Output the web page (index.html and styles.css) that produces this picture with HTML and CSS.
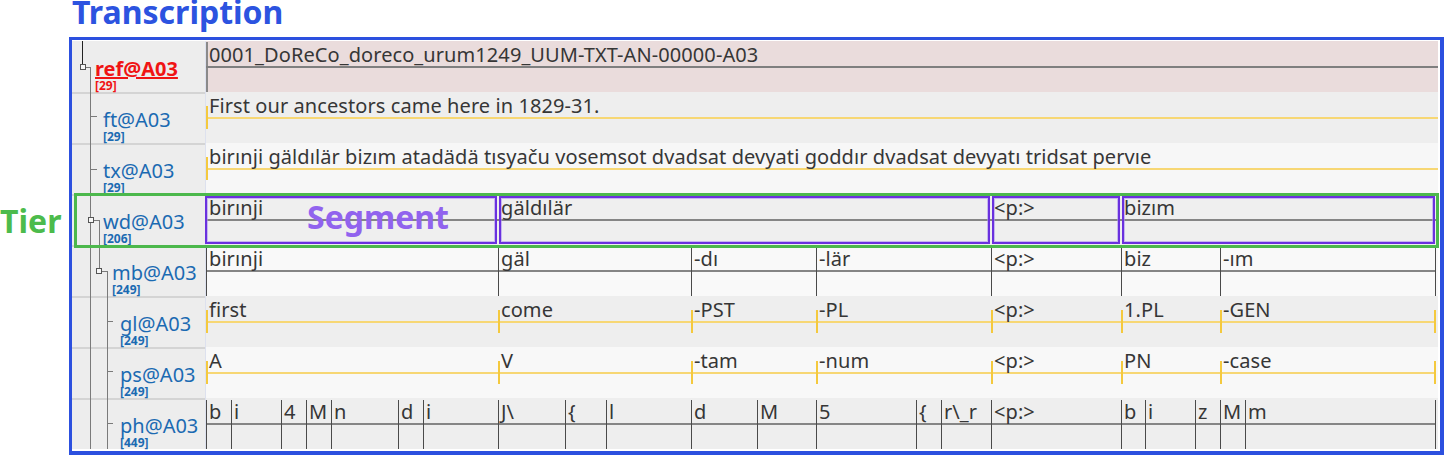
FILE: index.html
```html
<!DOCTYPE html>
<html>
<head>
<meta charset="utf-8">
<title>Transcription</title>
<link rel="stylesheet" href="styles.css">
</head>
<body>
<div class="page">
  <h1 class="title">Transcription</h1>
  <div class="main">
    <div class="gutter"><span class="tier-note">Tier</span></div>
    <div class="frame">
      <div class="labels">
        <svg class="tree" width="133" height="408" viewBox="0 0 133 408">
          <g fill="none" stroke-width="1">
            <path d="M10.5 0V23.5" stroke="#222"/>
            <path d="M13.5 26.5H18.5M18.5 26V408M18.5 75.5H25M18.5 128.5H25" stroke="#7a7a7a"/>
            <path d="M21.5 179.5H27.5M27.5 179V227.5M29.5 230.5H35.5M35.5 230V408M35.5 280.5H41M35.5 330.5H41M35.5 382.5H41" stroke="#7a7a7a"/>
            <rect x="8.5" y="23.5" width="5" height="5" fill="#f6f6f6" stroke="#555"/>
            <rect x="16.5" y="176.5" width="5" height="5" fill="#f6f6f6" stroke="#555"/>
            <rect x="24.5" y="227.5" width="5" height="5" fill="#f6f6f6" stroke="#555"/>
          </g>
        </svg>
        <div class="lrow lv0 active"><div class="lname">ref@A03</div><div class="lcount">[29]</div></div>
        <div class="lrow lv1"><div class="lname">ft@A03</div><div class="lcount">[29]</div></div>
        <div class="lrow lv1"><div class="lname">tx@A03</div><div class="lcount">[29]</div></div>
        <div class="lrow lv1"><div class="lname">wd@A03</div><div class="lcount">[206]</div></div>
        <div class="lrow lv2"><div class="lname">mb@A03</div><div class="lcount">[249]</div></div>
        <div class="lrow lv3"><div class="lname">gl@A03</div><div class="lcount">[249]</div></div>
        <div class="lrow lv3"><div class="lname">ps@A03</div><div class="lcount">[249]</div></div>
        <div class="lrow lv3"><div class="lname">ph@A03</div><div class="lcount">[449]</div></div>
      </div>
      <div class="data">
        <div class="row r-ref"><div class="cell full">0001_DoReCo_doreco_urum1249_UUM-TXT-AN-00000-A03</div></div>
        <div class="row r-ft"><div class="cell full">First our ancestors came here in 1829-31.</div></div>
        <div class="row r-tx"><div class="cell full">birınji gäldılär bizım atadädä tısyaču vosemsot dvadsat devyati goddır dvadsat devyatı tridsat pervıe</div></div>
        <div class="row r-wd">
          <div class="cell" style="width:292px">birınji</div>
          <div class="cell" style="width:493px">gäldılär</div>
          <div class="cell" style="width:130px">&lt;p:&gt;</div>
          <div class="cell" style="width:315px">bizım</div>
        </div>
        <div class="row r-mb">
          <div class="cell" style="width:292px">birınji</div>
          <div class="cell" style="width:193px">gäl</div>
          <div class="cell" style="width:125px">-dı</div>
          <div class="cell" style="width:175px">-lär</div>
          <div class="cell" style="width:130px">&lt;p:&gt;</div>
          <div class="cell" style="width:99px">biz</div>
          <div class="cell" style="width:216px">-ım</div>
        </div>
        <div class="row r-gl">
          <div class="cell" style="width:292px">first</div>
          <div class="cell" style="width:193px">come</div>
          <div class="cell" style="width:125px">-PST</div>
          <div class="cell" style="width:175px">-PL</div>
          <div class="cell" style="width:130px">&lt;p:&gt;</div>
          <div class="cell" style="width:99px">1.PL</div>
          <div class="cell" style="width:216px">-GEN</div>
        </div>
        <div class="row r-ps">
          <div class="cell" style="width:292px">A</div>
          <div class="cell" style="width:193px">V</div>
          <div class="cell" style="width:125px">-tam</div>
          <div class="cell" style="width:175px">-num</div>
          <div class="cell" style="width:130px">&lt;p:&gt;</div>
          <div class="cell" style="width:99px">PN</div>
          <div class="cell" style="width:216px">-case</div>
        </div>
        <div class="row r-ph">
          <div class="cell" style="width:25px">b</div>
          <div class="cell" style="width:50px">i</div>
          <div class="cell" style="width:25px">4</div>
          <div class="cell" style="width:25px">M</div>
          <div class="cell" style="width:67px">n</div>
          <div class="cell" style="width:25px">d</div>
          <div class="cell" style="width:75px">i</div>
          <div class="cell" style="width:67px">J\</div>
          <div class="cell" style="width:41px">{</div>
          <div class="cell" style="width:85px">l</div>
          <div class="cell" style="width:66px">d</div>
          <div class="cell" style="width:59px">M</div>
          <div class="cell" style="width:100px">5</div>
          <div class="cell" style="width:25px">{</div>
          <div class="cell" style="width:50px">r\_r</div>
          <div class="cell" style="width:130px">&lt;p:&gt;</div>
          <div class="cell" style="width:24px">b</div>
          <div class="cell" style="width:50px">i</div>
          <div class="cell" style="width:25px">z</div>
          <div class="cell" style="width:25px">M</div>
          <div class="cell" style="width:191px">m</div>
        </div>
      </div>
    </div>
    <div class="tier-box"></div>
    <div class="seg-note">Segment</div>
  </div>
</div>
</body>
</html>
```

FILE: styles.css
```css
* { box-sizing: border-box; }

body {
  margin: 0;
  background: #ffffff;
  font-family: "Noto Sans", "Open Sans", sans-serif;
}

.page {
  width: 1444px;
  height: 455px;
  overflow: hidden;
}

.title {
  margin: 0 0 0 72px;
  height: 37px;
  padding-bottom: 13px;
  font-size: 32px;
  line-height: 24px;
  font-weight: 700;
  color: #2c53e0;
}

.main {
  position: relative;
  display: flex;
}

.gutter {
  width: 69px;
  flex: none;
  padding-top: 168px;
}

.tier-note {
  display: block;
  font-size: 32px;
  line-height: 32px;
  font-weight: 700;
  color: #4cbb4c;
}

.frame {
  display: flex;
  width: 1375px;
  height: 418px;
  border-style: solid;
  border-color: #2c50df;
  border-width: 3px 4px 4px 3px;
  padding: 1px 2px 2px 0;
  background: #ffffff;
}

.labels {
  position: relative;
  width: 134px;
  flex: none;
  border-right: 1px solid #dde1ee;
  background: #ededed;
}

.tree {
  position: absolute;
  left: 0;
  top: 0;
}

.lrow {
  height: 51px;
  padding-top: 17px;
  white-space: nowrap;
}

.lrow + .lrow {
  background: linear-gradient(#d4d4d4, #d4d4d4) 0 0 / 100% 2px no-repeat;
}

.lname {
  font-size: 20px;
  line-height: 22px;
  color: #1b6ab2;
}

.lcount {
  font-size: 12px;
  line-height: 12px;
  font-weight: 700;
  color: #1b6ab2;
}

.lv0 { padding-left: 23px; }
.lv1 { padding-left: 31px; }
.lv2 { padding-left: 40px; }
.lv3 { padding-left: 48px; }

.lrow.active .lname {
  font-weight: 700;
  color: #f01414;
  text-decoration: underline;
}

.lrow.active .lcount { color: #f01414; }

.data {
  flex: 1;
  display: flex;
  flex-direction: column;
}

.row {
  height: 51px;
  display: flex;
}

.cell {
  flex: none;
  height: 51px;
  padding: 2px 0 0 3px;
  font-size: 20px;
  line-height: 24px;
  letter-spacing: 0.08px;
  color: #363636;
  white-space: nowrap;
  overflow: hidden;
}

.cell.full { flex: 1; }

.r-ref { background: #eadcdc; }
.r-ft { background: #eeeeee; }
.r-tx { background: #f7f7f7; }
.r-wd { background: #efefef; }
.r-mb { background: #f9f9f9; }
.r-gl { background: #eeeeee; }
.r-ps { background: #f8f8f8; }
.r-ph { background: #eeeeee; }

/* reference tier: gray line + left boundary */
.r-ref .cell {
  background:
    linear-gradient(#7f7f7f, #7f7f7f) 0 25px / 100% 2px no-repeat,
    linear-gradient(#8a8a8a, #8a8a8a) 0 1px / 2px 50px no-repeat;
}

/* symbolic association tiers: yellow line + yellow ticks */
.r-ft .cell,
.r-tx .cell,
.r-gl .cell,
.r-ps .cell {
  background:
    linear-gradient(#f4c93e, #f4c93e) 0 14px / 2px 23px no-repeat,
    linear-gradient(#f7d774, #f7d774) 0 25px / 100% 2px no-repeat;
}

.r-gl .cell:last-child,
.r-ps .cell:last-child {
  background:
    linear-gradient(#f4c93e, #f4c93e) 0 14px / 2px 23px no-repeat,
    linear-gradient(#f4c93e, #f4c93e) right 0 top 14px / 2px 23px no-repeat,
    linear-gradient(#f7d774, #f7d774) 0 25px / 100% 2px no-repeat;
}

/* subdivision tiers: dark boundaries + gray line */
.r-mb .cell,
.r-ph .cell {
  background:
    linear-gradient(#4a4a4a, #4a4a4a) 0 2px / 1px 49px no-repeat,
    linear-gradient(#858585, #858585) 0 25px / 100% 2px no-repeat;
}

.r-mb .cell:last-child,
.r-ph .cell:last-child {
  background:
    linear-gradient(#4a4a4a, #4a4a4a) 0 2px / 1px 49px no-repeat,
    linear-gradient(#4a4a4a, #4a4a4a) right 0 top 2px / 1px 49px no-repeat,
    linear-gradient(#858585, #858585) 0 25px / 100% 2px no-repeat;
}

/* word tier: segments outlined */
.r-wd .cell {
  position: relative;
  overflow: visible;
  background: linear-gradient(#858585, #858585) 0 25px / 100% 2px no-repeat;
}

.r-wd .cell::after {
  content: "";
  position: absolute;
  top: 2px;
  bottom: 1px;
  left: 1px;
  right: 1px;
  border: 2px solid #6a31de;
  box-shadow: inset 0 0 0 1px rgba(170, 145, 240, 0.6);
}

.r-wd .cell:first-child::after { left: -1px; }

.tier-box {
  position: absolute;
  left: 74px;
  top: 156px;
  width: 1365px;
  height: 55px;
  border: 3px solid #4cb84c;
}

.seg-note {
  position: absolute;
  left: 307px;
  top: 164px;
  font-size: 32px;
  line-height: 32px;
  font-weight: 700;
  color: #9163ee;
}
```
